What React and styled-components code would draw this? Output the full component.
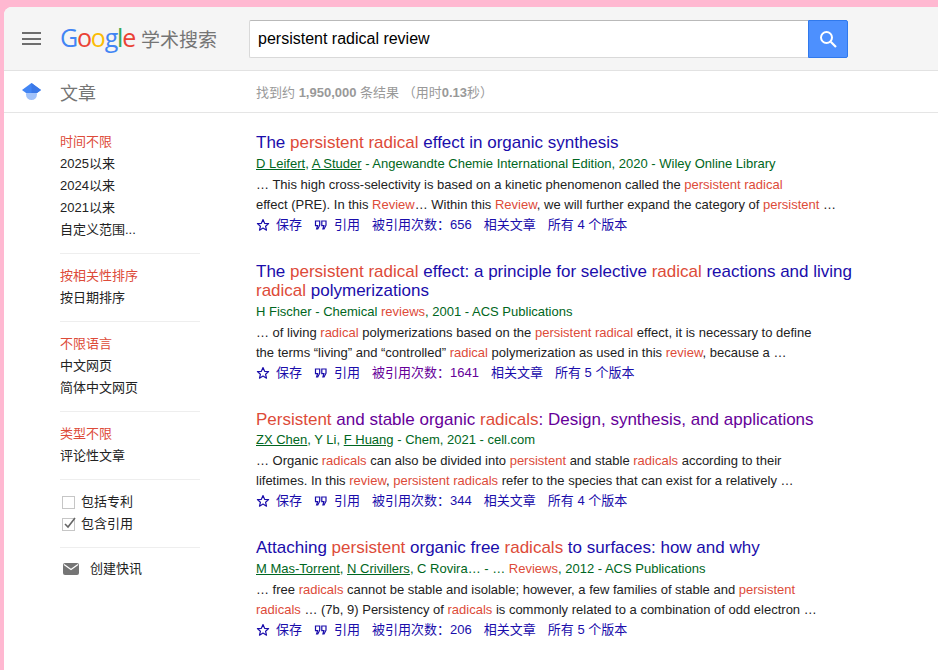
import React from "react";
import styled, { createGlobalStyle } from "styled-components";

const Global = createGlobalStyle`
  html, body { margin: 0; padding: 0; height: 670px; overflow: hidden; background: #ffb6d0; }
  body { font-family: "Liberation Sans", "Noto Sans CJK SC", sans-serif; }
  #root { height: 670px; }
`;

const Page = styled.div`
  height: 670px;
  padding: 7px 0 0 4px;
  box-sizing: border-box;
  background: #ffb8d1;
  overflow: hidden;
`;
const Panel = styled.div`
  background: #fff;
  height: 100%;
  border-top-left-radius: 8px;
  overflow: hidden;
`;
const Header = styled.header`
  height: 63px;
  background: #f5f5f5;
  border-bottom: 1px solid #e2e2e2;
  display: flex;
  align-items: center;
  padding-left: 18px;
  box-sizing: content-box;
`;
const Menu = styled.div`
  width: 19px;
  height: 13px;
  display: flex;
  flex-direction: column;
  justify-content: space-between;
  margin-right: 19px;
  span { display: block; height: 2px; background: #6e6e6e; }
`;
const Logo = styled.div`
  display: flex;
  align-items: baseline;
  width: 189px;
  flex: none;
  margin-top: -4px;
`;
const Google = styled.span`
  font-family: "Open Sans", sans-serif;
  font-size: 25px;
  letter-spacing: -1.2px;
  font-weight: 400;
`;
const Letter = styled.span`color: ${(p) => p.$c};`;
const LogoCn = styled.span`
  font-family: "Noto Sans CJK SC", sans-serif;
  font-size: 19px;
  color: #757575;
  margin-left: 6px;
`;
const Search = styled.div`
  display: flex;
  height: 38px;
`;
const SearchInput = styled.div`
  width: 559px;
  box-sizing: border-box;
  background: #fff;
  border: 1px solid #d9d9d9;
  border-top-color: #b9b9b9;
  border-right: 0;
  border-radius: 2px 0 0 2px;
  padding-left: 8px;
  font-size: 16px;
  line-height: 36px;
  color: #000;
`;
const SearchBtn = styled.div`
  width: 40px;
  box-sizing: border-box;
  background: #4d90fe;
  border: 1px solid #3079ed;
  border-radius: 0 2px 2px 0;
  display: flex;
  align-items: center;
  justify-content: center;
`;
const SubBar = styled.div`
  height: 41px;
  border-bottom: 1px solid #e5e5e5;
  display: flex;
  align-items: center;
`;
const CapCell = styled.div`
  width: 56px;
  padding-left: 18px;
  box-sizing: border-box;
  display: flex;
  flex: none;
`;
const SectionTitle = styled.div`
  width: 196px;
  flex: none;
  font-size: 18px;
  color: #757575;
`;
const Stats = styled.div`
  font-size: 13px;
  color: #999;
  b { font-weight: 700; }
`;
const Body = styled.div`
  display: flex;
`;
const Side = styled.aside`
  width: 196px;
  margin-left: 56px;
  flex: none;
  padding-top: 18px;
  box-sizing: border-box;
`;
const SideGroup = styled.div`
  width: 140px;
  padding-bottom: 12px;
  margin-bottom: 11px;
  border-bottom: ${(p) => (p.$last ? "none" : "1px solid #eee")};
`;
const SideItem = styled.div`
  font-size: 13px;
  line-height: 22px;
  color: ${(p) => (p.$on ? "#dd4b39" : "#222")};
`;
const Check = styled.label`
  display: flex;
  align-items: center;
  font-size: 13px;
  line-height: 22px;
  color: #222;
  gap: 6px;
  margin-left: 2px;
`;
const Box = styled.span`
  position: relative;
  width: 11px;
  height: 11px;
  border: 1px solid #c6c6c6;
  display: block;
  svg { position: absolute; left: 0; top: -2px; }
`;
const Alert = styled.div`
  display: flex;
  align-items: center;
  font-size: 13px;
  line-height: 20px;
  color: #222;
  gap: 11px;
  margin-left: 3px;
`;
const Results = styled.main`
  width: 600px;
  padding-top: 20px;
`;
const Result = styled.article`
  margin-bottom: 26px;
`;
const Title = styled.h3`
  margin: 0;
  font-weight: 400;
  font-size: 17px;
  line-height: 19.5px;
  color: ${(p) => (p.$visited ? "#660099" : "#1a0dab")};
`;
const Hit = styled.span`color: #dd4b39;`;
const Meta = styled.div`
  font-size: 13px;
  line-height: 21px;
  color: #006621;
  u { text-decoration: underline; }
`;
const Snip = styled.div`
  font-size: 13px;
  line-height: 19px;
  color: #222;
  margin-top: 1px;
  white-space: nowrap;
`;
const Actions = styled.div`
  display: flex;
  align-items: center;
  font-size: 13px;
  line-height: 22px;
  color: #1a0dab;
  margin-top: 0;
`;
const Action = styled.span`
  display: inline-flex;
  align-items: center;
  gap: 6px;
  margin-right: ${(p) => p.$gap ?? 12}px;
  color: ${(p) => (p.$visited ? "#660099" : "#1a0dab")};
`;
const Related = styled.h3`
  margin: 9px 0 0;
  font-weight: 400;
  font-size: 17px;
  color: #222;
`;

const Star = () => (
  <svg width="14" height="14" viewBox="0 0 14 14" fill="none">
    <path d="M7 1.6l1.6 3.7 4 .35-3 2.65.9 3.9L7 10.1l-3.5 2.1.9-3.9-3-2.65 4-.35z" stroke="#1a0dab" strokeWidth="1.2" strokeLinejoin="round" />
  </svg>
);
const Quote = () => (
  <svg width="14" height="14" viewBox="0 0 14 14" fill="none" stroke="#1a0dab" strokeWidth="1.2">
    <path d="M1.5 3h4.2v4.2L3.8 11H2.6l1-3.4H1.5z" />
    <path d="M7.8 3H12v4.2L10.1 11H8.9l1-3.4H7.8z" />
  </svg>
);

const H = ({ children }) => <Hit>{children}</Hit>;

const ResultItem = ({ title, meta, s1, s2, cites, version, visited, citeVisited }) => (
  <Result>
    <Title $visited={visited}>{title}</Title>
    <Meta>{meta}</Meta>
    <Snip>{s1}</Snip>
    <Snip>{s2}</Snip>
    <Actions>
      <Action $gap={12}><Star />保存</Action>
      <Action $gap={12}><Quote />引用</Action>
      <Action $gap={12} $visited={citeVisited}>被引用次数：{cites}</Action>
      <Action $gap={12}>相关文章</Action>
      <Action>所有 {version} 个版本</Action>
    </Actions>
  </Result>
);

export default function App() {
  return (
    <Page>
      <Global />
      <Panel>
        <Header>
          <Menu><span /><span /><span /></Menu>
          <Logo>
            <Google>
              <Letter $c="#4285f4">G</Letter><Letter $c="#ea4335">o</Letter><Letter $c="#fbbc05">o</Letter><Letter $c="#4285f4">g</Letter><Letter $c="#34a853">l</Letter><Letter $c="#ea4335">e</Letter>
            </Google>
            <LogoCn>学术搜索</LogoCn>
          </Logo>
          <Search>
            <SearchInput>persistent radical review</SearchInput>
            <SearchBtn>
              <svg width="20" height="20" viewBox="0 0 20 20" fill="none" stroke="#fff">
                <circle cx="8.5" cy="8.5" r="5.5" strokeWidth="2" />
                <path d="M12.7 12.7L18 18" strokeWidth="2.2" />
              </svg>
            </SearchBtn>
          </Search>
        </Header>
        <SubBar>
          <CapCell>
            <svg width="19" height="19" viewBox="0 0 19 19">
              <circle cx="9.5" cy="12.5" r="5.5" fill="#a1c2fa" />
              <path d="M0 8l9.5-7 9.5 7-4 3h-11z" fill="#4285f4" />
              <path d="M9.5 1l9.5 7-4 3H9.5z" fill="#3b78e7" />
            </svg>
          </CapCell>
          <SectionTitle>文章</SectionTitle>
          <Stats>找到约 <b>1,950,000</b> 条结果 （用时<b>0.13</b>秒）</Stats>
        </SubBar>
        <Body>
          <Side>
            <SideGroup>
              <SideItem $on>时间不限</SideItem>
              <SideItem>2025以来</SideItem>
              <SideItem>2024以来</SideItem>
              <SideItem>2021以来</SideItem>
              <SideItem>自定义范围...</SideItem>
            </SideGroup>
            <SideGroup>
              <SideItem $on>按相关性排序</SideItem>
              <SideItem>按日期排序</SideItem>
            </SideGroup>
            <SideGroup>
              <SideItem $on>不限语言</SideItem>
              <SideItem>中文网页</SideItem>
              <SideItem>简体中文网页</SideItem>
            </SideGroup>
            <SideGroup>
              <SideItem $on>类型不限</SideItem>
              <SideItem>评论性文章</SideItem>
            </SideGroup>
            <SideGroup>
              <Check><Box />包括专利</Check>
              <Check>
                <Box>
                  <svg width="14" height="14" viewBox="0 0 14 14" fill="none"><path d="M2 7l3 3 7-9" stroke="#666" strokeWidth="1.6" /></svg>
                </Box>
                包含引用
              </Check>
            </SideGroup>
            <SideGroup $last>
              <Alert>
                <svg width="16" height="12" viewBox="0 0 16 12">
                  <rect width="16" height="12" rx="2" fill="#757575" />
                  <path d="M1 1.5l7 5 7-5" fill="none" stroke="#fff" strokeWidth="1.3" />
                </svg>
                创建快讯
              </Alert>
            </SideGroup>
          </Side>
          <Results>
            <ResultItem
              title={<>The <H>persistent radical</H> effect in organic synthesis</>}
              meta={<><u>D Leifert</u>, <u>A Studer</u> - Angewandte Chemie International Edition, 2020 - Wiley Online Library</>}
              s1={<>… This high cross-selectivity is based on a kinetic phenomenon called the <H>persistent radical</H></>}
              s2={<>effect (PRE). In this <H>Review</H>… Within this <H>Review</H>, we will further expand the category of <H>persistent</H> …</>}
              cites="656" version="4"
            />
            <ResultItem
              title={<>The <H>persistent radical</H> effect: a principle for selective <H>radical</H> reactions and living<br /><H>radical</H> polymerizations</>}
              meta={<>H Fischer - Chemical <H>reviews</H>, 2001 - ACS Publications</>}
              s1={<>… of living <H>radical</H> polymerizations based on the <H>persistent radical</H> effect, it is necessary to define</>}
              s2={<>the terms “living” and “controlled” <H>radical</H> polymerization as used in this <H>review</H>, because a …</>}
              cites="1641" version="5" citeVisited
            />
            <ResultItem
              visited
              title={<><H>Persistent</H> and stable organic <H>radicals</H>: Design, synthesis, and applications</>}
              meta={<><u>ZX Chen</u>, Y Li, <u>F Huang</u> - Chem, 2021 - cell.com</>}
              s1={<>… Organic <H>radicals</H> can also be divided into <H>persistent</H> and stable <H>radicals</H> according to their</>}
              s2={<>lifetimes. In this <H>review</H>, <H>persistent radicals</H> refer to the species that can exist for a relatively …</>}
              cites="344" version="4"
            />
            <ResultItem
              title={<>Attaching <H>persistent</H> organic free <H>radicals</H> to surfaces: how and why</>}
              meta={<><u>M Mas-Torrent</u>, <u>N Crivillers</u>, C Rovira… - … <H>Reviews</H>, 2012 - ACS Publications</>}
              s1={<>… free <H>radicals</H> cannot be stable and isolable; however, a few families of stable and <H>persistent</H></>}
              s2={<><H>radicals</H> … (7b, 9) Persistency of <H>radicals</H> is commonly related to a combination of odd electron …</>}
              cites="206" version="5"
            />
            <Related>相关搜索</Related>
          </Results>
        </Body>
      </Panel>
    </Page>
  );
}
